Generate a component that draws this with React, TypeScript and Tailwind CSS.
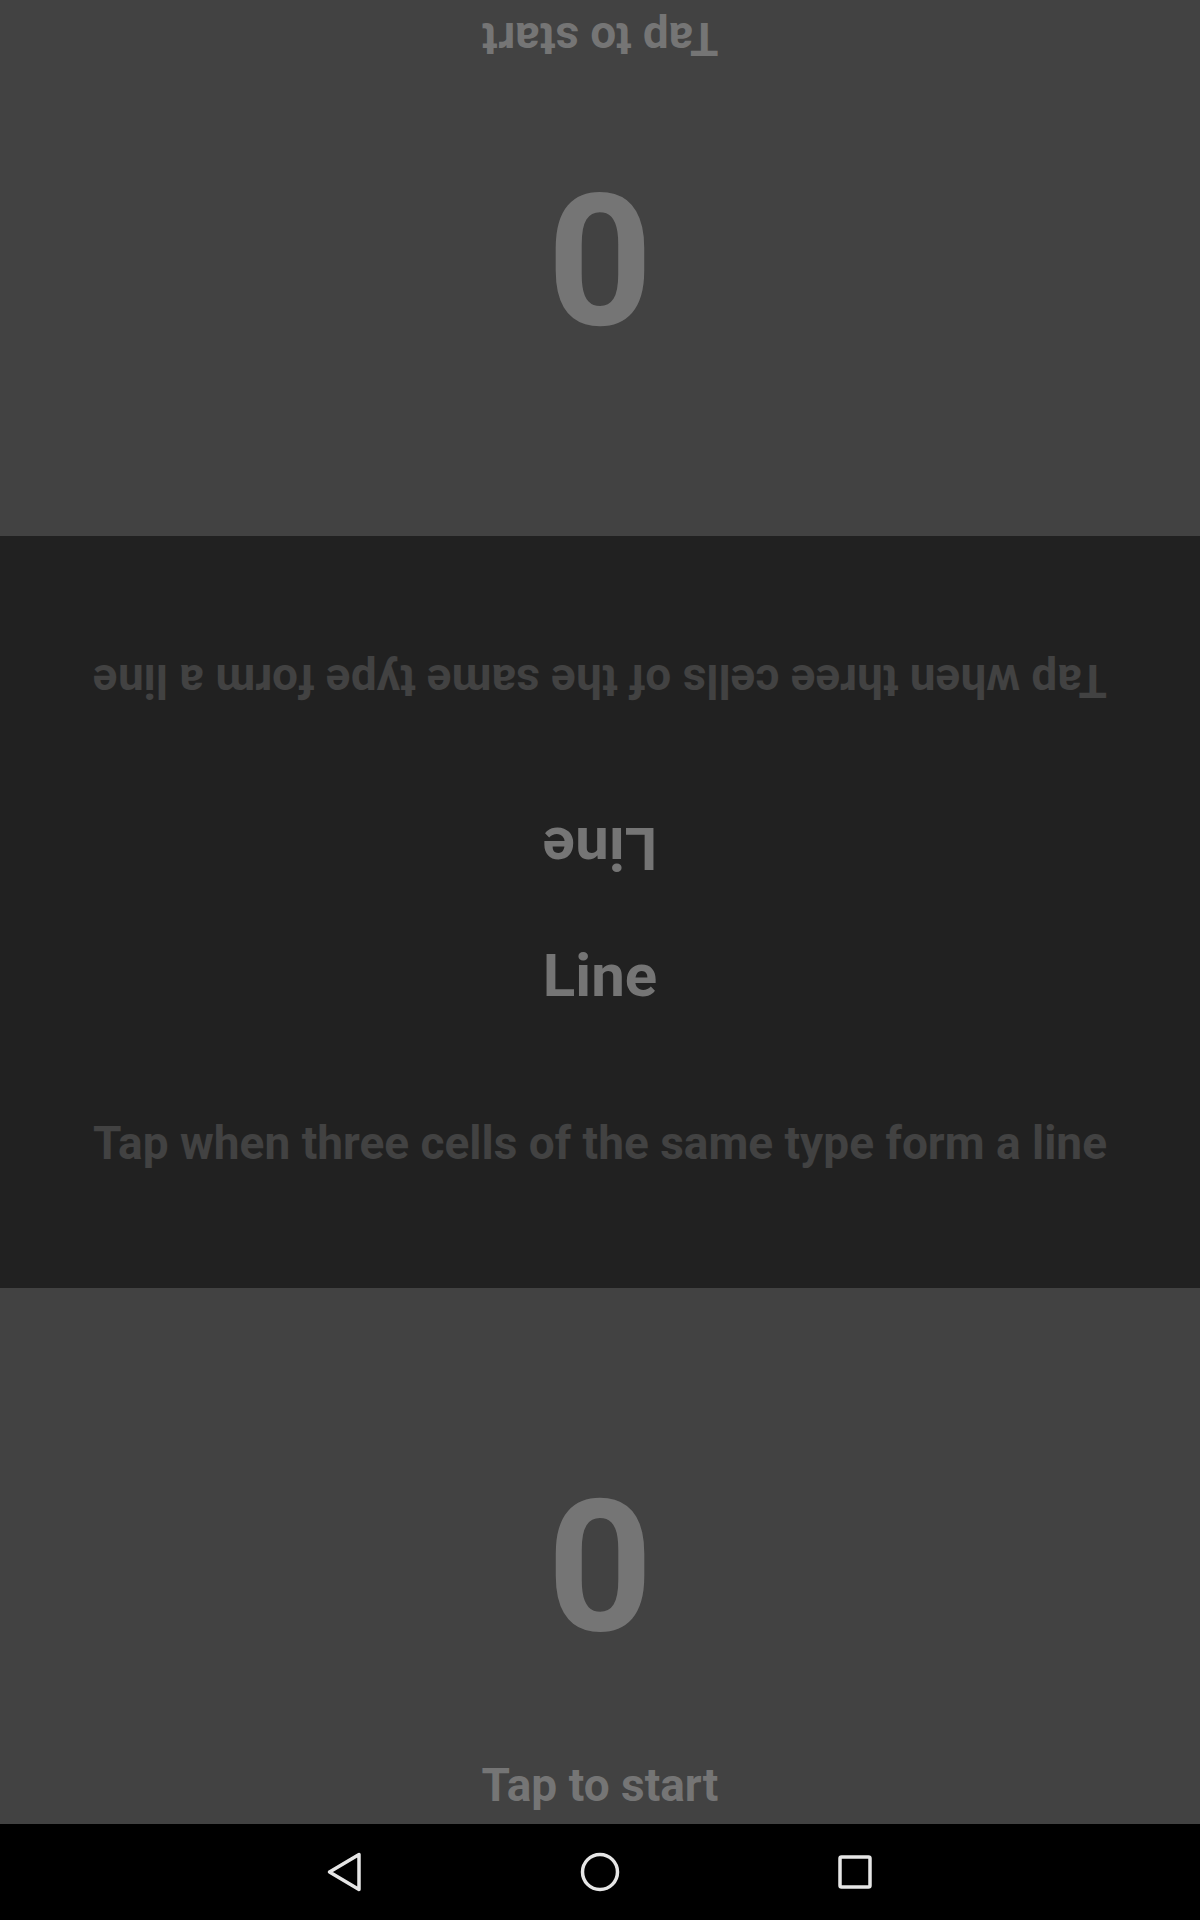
function ScorePanel({ flipped }: { flipped?: boolean }) {
  return (
    <div
      className={`h-[536px] shrink-0 bg-[#424242] flex flex-col items-center text-[#757575] ${
        flipped ? "rotate-180" : ""
      }`}
    >
      <div className="pt-[187px] text-[184px] leading-none">0</div>
      <div className="flex-1" />
      <div className="pb-[12px] text-[46px] leading-[54px]">Tap to start</div>
    </div>
  );
}

function RuleHalf({ flipped }: { flipped?: boolean }) {
  return (
    <div
      className={`h-[376px] flex flex-col items-center ${
        flipped ? "rotate-180" : ""
      }`}
    >
      <div className="mt-[29px] text-[60px] leading-[70px] text-[#757575]">
        Line
      </div>
      <div className="mt-[105px] text-[46px] leading-[54px] text-[#424242] whitespace-nowrap">
        Tap when three cells of the same type form a line
      </div>
    </div>
  );
}

function NavBar() {
  return (
    <div className="h-[96px] bg-black flex items-center justify-center">
      <div className="w-[255px] flex justify-center">
        <svg width="48" height="48" viewBox="0 0 48 48" fill="none">
          <path
            d="M8.5 24 L38 6.5 L38 41.5 Z"
            stroke="#e6e6e6"
            strokeWidth="3.5"
            strokeLinejoin="round"
          />
        </svg>
      </div>
      <div className="w-[255px] flex justify-center">
        <svg width="48" height="48" viewBox="0 0 48 48" fill="none">
          <circle cx="24" cy="24" r="17.5" stroke="#e6e6e6" strokeWidth="3.5" />
        </svg>
      </div>
      <div className="w-[255px] flex justify-center">
        <svg width="48" height="48" viewBox="0 0 48 48" fill="none">
          <rect
            x="9"
            y="9"
            width="30"
            height="30"
            rx="1.5"
            stroke="#e6e6e6"
            strokeWidth="3.5"
          />
        </svg>
      </div>
    </div>
  );
}

export default function App() {
  return (
    <div className="w-[1200px] h-[1920px] flex flex-col font-['Roboto',sans-serif] font-bold overflow-hidden">
      <ScorePanel flipped />
      <div className="h-[752px] shrink-0 bg-[#212121] flex flex-col">
        <RuleHalf flipped />
        <RuleHalf />
      </div>
      <ScorePanel />
      <NavBar />
    </div>
  );
}
